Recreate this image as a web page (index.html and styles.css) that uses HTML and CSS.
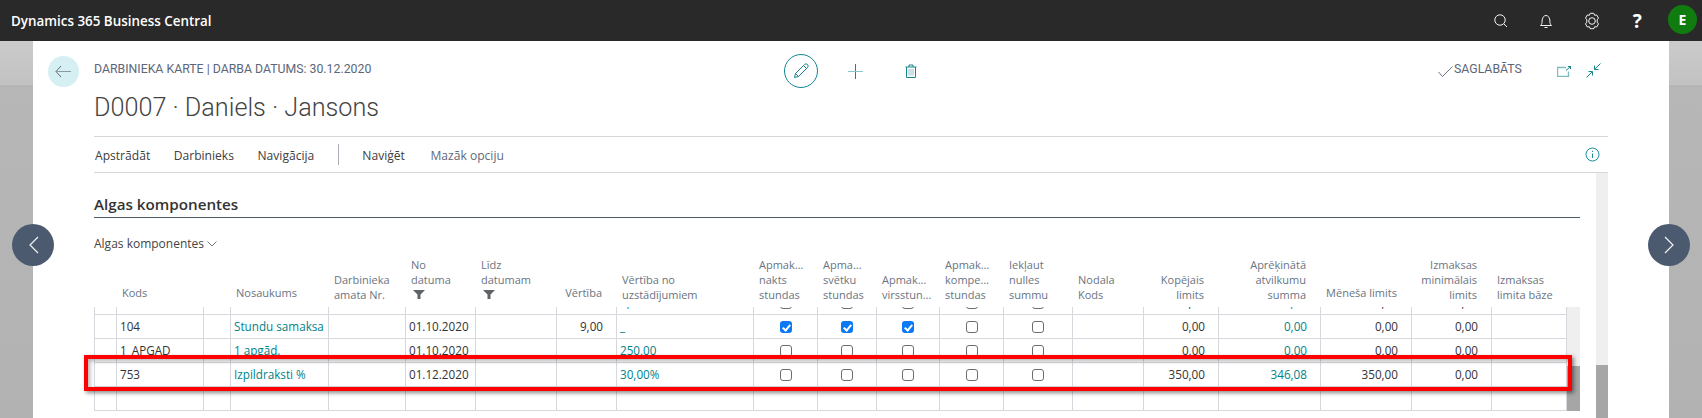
FILE: index.html
```html
<!DOCTYPE html>
<html lang="lv">
<head>
    <meta charset="UTF-8">
    <title>Darbinieka karte</title>
    <link rel="stylesheet" href="styles.css">
</head>
<body>
    <header class="topbar">
        <span class="brand">Dynamics 365 Business Central</span>
        <div class="top-icons">
            <span class="top-btn">
                <svg width="18" height="18" viewBox="0 0 18 18"><circle cx="8" cy="8" r="5.2"/><path d="M11.8 11.8 15 15"/></svg>
            </span>
            <span class="top-btn">
                <svg width="18" height="18" viewBox="0 0 18 18"><path d="M3.5 13.5c1.2-1 1.6-2 1.6-4.500 0-3 1.600-5.500 3.900-5.500s3.900 2.500 3.900 5.500c0 2.500.4 3.500 1.600 4.500z"/><path d="M7.500 15.500h3"/></svg>
            </span>
            <span class="top-btn">
                <svg width="20" height="20" viewBox="0 0 20 20"><path d="M8.200 2.300h3.600l.8 2 2.100-.3 1.800 3.100-1.300 1.700 0 2.400 1.300 1.700-1.800 3.100-2.100-.3-.8 2H8.200l-.8-2-2.100.3-1.800-3.100 1.300-1.700V8.800L3.500 7.100l1.800-3.100 2.100.3z"/><circle cx="10" cy="10" r="3.300"/></svg>
            </span>
            <span class="top-btn help">?</span>
            <span class="avatar">E</span>
        </div>
    </header>

    <div class="stage">
        <div class="gutter"></div>
        <main class="card">
            <section class="page-head">
                <div class="head-top">
                    <div class="head-left">
                        <span class="back-btn">
                            <svg width="17" height="13" viewBox="0 0 17 13"><path d="M6 1 1 6.500 6 12"/><path d="M1 6.500h15" class="soft"/></svg>
                        </span>
                        <span class="caption">DARBINIEKA KARTE | DARBA DATUMS: 30.12.2020</span>
                    </div>
                    <div class="head-actions">
                        <span class="edit-btn">
                            <svg width="16" height="16" viewBox="0 0 16 16"><path d="M1.500 14.500 2.500 10.500 11.500 1.500a1.500 1.500 0 0 1 3 3L5.500 13.500z"/><path d="M2.500 10.500 5.500 13.500M10.500 2.500l3 3"/></svg>
                        </span>
                        <svg class="plus-ico" width="15" height="15" viewBox="0 0 15 15"><path d="M7.500 0v15"/><path d="M0 7.500h15" class="soft"/></svg>
                        <svg class="trash-ico" width="12" height="14" viewBox="0 0 12 14"><path d="M.5 3h11M1.500 3v10.500h9V3M4 3V1h4v2"/><path d="M4 5v6.500M6 5v6.500M8 5v6.500" class="soft"/></svg>
                    </div>
                    <div class="head-right">
                        <svg width="15" height="11" viewBox="0 0 15 11" class="saved-ico"><path d="M.5 6 4.500 10.500 14.500.5"/></svg>
                        <span class="caption saved">SAGLABĀTS</span>
                        <svg class="open-ico" width="14" height="11" viewBox="0 0 14 11"><path d="M9 1.500H.5v9h11V5.500" class="soft"/><path d="M9 4.500 13.500.5M10.800.5h2.700v2.700"/></svg>
                        <svg class="shrink-ico" width="15" height="15" viewBox="0 0 15 15"><path d="M14.500.5 8.800 6.200M8.500 2.500v4h4"/><path d="M.5 14.500 6.200 8.800M2.500 8.500h4v4"/></svg>
                    </div>
                </div>
                <h1 class="page-title">D0007 · Daniels · Jansons</h1>
            </section>

            <nav class="action-bar">
                <a>Apstrādāt</a>
                <a>Darbinieks</a>
                <a>Navigācija</a>
                <span class="bar-sep"></span>
                <a>Naviģēt</a>
                <a class="muted">Mazāk opciju</a>
                <svg class="info-ico" width="15" height="15" viewBox="0 0 15 15"><circle cx="7.500" cy="7.500" r="6.500"/><path d="M7.500 6.500v4.500M7.500 3.800v1.200"/></svg>
            </nav>

            <div class="scroll-area">
                <div class="content">
                    <h2 class="section-title">Algas komponentes</h2>
                    <div class="part-title">Algas komponentes<svg width="10" height="6" viewBox="0 0 10 6"><path d="M.5.5 5 5 9.500.5"/></svg></div>

                    <div class="cols grid-head">
                        <div></div>
                        <div class="hd single">Kods</div>
                        <div></div>
                        <div class="hd single">Nosaukums</div>
                        <div class="hd">Darbinieka<br>amata Nr.</div>
                        <div class="hd">No<br>datuma<svg class="funnel" width="12" height="9" viewBox="0 0 12 9"><path d="M0 0h12L7.500 4.500V9h-3V4.500z"/></svg></div>
                        <div class="hd">Līdz<br>datumam<svg class="funnel" width="12" height="9" viewBox="0 0 12 9"><path d="M0 0h12L7.500 4.500V9h-3V4.500z"/></svg></div>
                        <div class="hd num single">Vērtība</div>
                        <div class="hd">Vērtība no<br>uzstādījumiem</div>
                        <div class="hd">Apmak…<br>nakts<br>stundas</div>
                        <div class="hd">Apma…<br>svētku<br>stundas</div>
                        <div class="hd">Apmak…<br>virsstun…</div>
                        <div class="hd">Apmak…<br>kompe…<br>stundas</div>
                        <div class="hd">Iekļaut<br>nulles<br>summu</div>
                        <div class="hd">Nodala<br>Kods</div>
                        <div class="hd num">Kopējais<br>limits</div>
                        <div class="hd num">Aprēķinātā<br>atvilkumu<br>summa</div>
                        <div class="hd num single">Mēneša limits</div>
                        <div class="hd num">Izmaksas<br>minimālais<br>limits</div>
                        <div class="hd">Izmaksas<br>limita bāze</div>
                    </div>

                    <div class="grid-wrap">
                        <div class="grid-body">
                            <div class="rows">
                                <div class="cols row">
                                    <div></div><div></div><div></div><div></div><div></div><div></div><div></div><div></div>
                                    <div class="link">5,00</div>
                                    <div class="chk"><i></i></div><div class="chk"><i></i></div><div class="chk"><i></i></div><div class="chk"><i></i></div><div class="chk"><i></i></div>
                                    <div></div>
                                    <div class="num">0,00</div><div class="num link">0,00</div><div class="num">0,00</div><div class="num">0,00</div><div></div>
                                </div>
                                <div class="cols row">
                                    <div></div><div>104</div><div></div><div class="link">Stundu samaksa</div><div></div><div>01.10.2020</div><div></div>
                                    <div class="num">9,00</div>
                                    <div class="link">_</div>
                                    <div class="chk"><i class="on"></i></div><div class="chk"><i class="on"></i></div><div class="chk"><i class="on"></i></div><div class="chk"><i></i></div><div class="chk"><i></i></div>
                                    <div></div>
                                    <div class="num">0,00</div><div class="num link">0,00</div><div class="num">0,00</div><div class="num">0,00</div><div></div>
                                </div>
                                <div class="cols row">
                                    <div></div><div>1_APGAD</div><div></div><div class="link">1 apgād.</div><div></div><div>01.10.2020</div><div></div><div></div>
                                    <div class="link">250,00</div>
                                    <div class="chk"><i></i></div><div class="chk"><i></i></div><div class="chk"><i></i></div><div class="chk"><i></i></div><div class="chk"><i></i></div>
                                    <div></div>
                                    <div class="num">0,00</div><div class="num link">0,00</div><div class="num">0,00</div><div class="num">0,00</div><div></div>
                                </div>
                                <div class="cols row">
                                    <div></div><div>753</div><div></div><div class="link">Izpildraksti %</div><div></div><div>01.12.2020</div><div></div><div></div>
                                    <div class="link">30,00%</div>
                                    <div class="chk"><i></i></div><div class="chk"><i></i></div><div class="chk"><i></i></div><div class="chk"><i></i></div><div class="chk"><i></i></div>
                                    <div></div>
                                    <div class="num">350,00</div><div class="num link">346,08</div><div class="num">350,00</div><div class="num">0,00</div><div></div>
                                </div>
                                <div class="cols row">
                                    <div></div><div></div><div></div><div></div><div></div><div></div><div></div><div></div><div></div><div></div>
                                    <div></div><div></div><div></div><div></div><div></div><div></div><div></div><div></div><div></div><div></div>
                                </div>
                            </div>
                        </div>
                        <div class="grid-scroll"><span class="thumb"></span></div>
                        <div class="red-box"></div>
                    </div>
                </div>
                <div class="page-scroll"><span class="thumb"></span></div>
            </div>
        </main>
        <div class="gutter"></div>

        <span class="nav-btn prev">
            <svg width="11" height="18" viewBox="0 0 11 18"><path d="M10 1 2 9l8 8"/></svg>
        </span>
        <span class="nav-btn next">
            <svg width="11" height="18" viewBox="0 0 11 18"><path d="M1 1l8 8-8 8"/></svg>
        </span>
    </div>
</body>
</html>
```

FILE: styles.css
```css
body {
    margin: 0;
    height: 100vh;
    overflow: hidden;
    display: flex;
    flex-direction: column;
    font-family: "Open Sans", "Noto Sans", sans-serif;
    font-size: 11.7px;
    color: #333;
    background: #fff;
}

svg {
    fill: none;
    stroke-width: 1;
}

/* top bar */
.topbar {
    height: 41px;
    flex: none;
    display: flex;
    align-items: center;
    justify-content: space-between;
    padding: 0 5px 0 11px;
    background: #292929;
}

.brand {
    color: #fff;
    font-size: 13.4px;
    font-weight: 600;
}

.top-icons {
    display: flex;
    align-items: center;
}

.top-btn {
    width: 45.5px;
    display: flex;
    justify-content: center;
    color: #fff;
}

.top-btn svg {
    stroke: #f4f4f4;
}

.help {
    font-size: 19px;
    font-weight: 700;
    line-height: 24px;
}

.avatar {
    width: 29px;
    height: 29px;
    margin-left: 8px;
    margin-bottom: 3px;
    border-radius: 50%;
    background: #107c10;
    color: #fff;
    font-size: 14px;
    font-weight: 700;
    line-height: 29px;
    text-align: center;
}

/* page behind the card */
.stage {
    flex: 1;
    display: flex;
    position: relative;
    min-height: 0;
}

.gutter {
    width: 33px;
    flex: none;
    background: linear-gradient(180deg, #cbcbcb 0, #c2c2c2 44px, #adadad 45px, #b7b7b7 46px, #b2b2b2 100%);
}

.nav-btn {
    position: absolute;
    top: 183px;
    width: 42px;
    height: 42px;
    border-radius: 50%;
    background: #4c5a70;
    display: flex;
    align-items: center;
    justify-content: center;
}

.nav-btn svg {
    stroke: #f2f2f2;
    stroke-width: 1.2;
}

.prev {
    left: 12px;
}

.next {
    left: 1648px;
}

.card {
    flex: 1;
    min-width: 0;
    padding: 0 61px;
    display: flex;
    flex-direction: column;
    background: #fff;
}

/* page header */
.page-head {
    height: 96px;
    flex: none;
    box-sizing: border-box;
    border-bottom: 1px solid #d5d7da;
}

.head-top {
    display: flex;
    align-items: center;
    height: 34px;
    padding-top: 13px;
}

.head-left {
    width: 690px;
    display: flex;
    align-items: center;
    margin-left: -46px;
    margin-right: 46px;
    gap: 15px;
}

.back-btn {
    width: 31px;
    height: 31px;
    border-radius: 50%;
    background: #d6eff2;
    display: flex;
    align-items: center;
    justify-content: center;
}

.back-btn svg {
    stroke: #5f6a76;
}

.back-btn .soft {
    stroke: #8a9aa0;
}

.caption {
    font-family: Roboto, "Open Sans", sans-serif;
    font-size: 12.3px;
    color: #5c6678;
    margin-bottom: 4px;
}

.head-actions {
    display: flex;
    align-items: center;
}

.edit-btn {
    width: 34px;
    height: 34px;
    box-sizing: border-box;
    border: 1px solid #13868f;
    border-radius: 50%;
    display: flex;
    align-items: center;
    justify-content: center;
}

.head-actions svg {
    stroke: #1b858d;
}

.head-actions .soft {
    stroke: #8cc5c9;
}

.plus-ico {
    margin-left: 30px;
}

.trash-ico {
    margin-left: 42px;
}

.head-right {
    margin-left: auto;
    padding-right: 7px;
    display: flex;
    align-items: center;
}

.saved-ico {
    stroke: #6a7482;
    margin-right: 1px;
}

.saved {
    width: 103px;
}

.open-ico {
    stroke: #1b858d;
}

.open-ico .soft {
    stroke: #7dbcc1;
    stroke-width: 1.4;
}

.shrink-ico {
    stroke: #1b858d;
    margin-left: 15px;
    margin-bottom: 1px;
}

.page-title {
    margin: 2px 0 0;
    font-family: Roboto, "Open Sans", sans-serif;
    font-size: 25.2px;
    font-weight: 300;
    line-height: 36px;
    color: #444;
}

/* action bar */
.action-bar {
    height: 35px;
    flex: none;
    display: flex;
    align-items: center;
    gap: 23.5px;
    padding-left: 1px;
    padding-right: 8px;
    box-sizing: border-box;
    font-size: 12.1px;
    color: #404040;
}

.action-bar a {
    margin-top: 2px;
}

.bar-sep {
    width: 1px;
    height: 21px;
    background: #a9aeb6;
}

.action-bar .muted {
    margin-left: 2px;
    color: #5f6a7a;
}

.info-ico {
    margin-left: auto;
    stroke: #1b8f99;
}

/* scrolling content */
.scroll-area {
    flex: 1;
    min-height: 0;
    display: flex;
    border-top: 1px solid #d5d7da;
}

.content {
    flex: 1;
    min-width: 0;
}

.page-scroll {
    width: 12px;
    margin-left: 16px;
    flex: none;
    display: flex;
    flex-direction: column;
    justify-content: flex-end;
    background: #efefef;
}

.page-scroll .thumb {
    height: 53px;
    background: #a6a6a6;
}

.section-title {
    margin: 0;
    height: 45px;
    box-sizing: border-box;
    padding-top: 20px;
    border-bottom: 1px solid #505a6b;
    font-size: 15.2px;
    font-weight: 600;
    line-height: 22px;
    color: #333;
}

.part-title {
    height: 20px;
    margin-top: 16px;
    font-size: 12px;
    line-height: 20px;
    color: #444;
}

.part-title svg {
    stroke: #777;
    margin-left: 3px;
    vertical-align: 1px;
}

/* grid columns are shared by head and rows */
.cols {
    display: grid;
    grid-template-columns: 22px 87px 27px 98px 77px 70px 81px 60px 137px 64px 59px 63px 64px 69px 71px 75px 102px 91px 80px 75px;
}

.grid-head {
    height: 53px;
    margin-right: 14px;
}

.hd {
    align-self: end;
    padding: 0 6px 5px;
    font-size: 11px;
    line-height: 15px;
    color: #6a7482;
    white-space: nowrap;
}

.hd.single {
    padding-bottom: 7px;
}

.hd.num {
    text-align: right;
    padding-right: 14px;
}

.funnel {
    display: block;
    fill: #5f6368;
    margin: 3px 0 3px 2px;
}

.grid-wrap {
    display: flex;
    position: relative;
}

.grid-body {
    flex: 1;
    height: 104px;
    overflow: hidden;
}

.rows {
    margin-top: -16px;
    border-left: 1px solid #d5d8dd;
    border-right: 1px solid #d5d8dd;
}

.row {
    height: 24px;
    box-sizing: border-box;
    border-bottom: 1px solid #d5d8dd;
    line-height: 23px;
    color: #333;
}

.row > div {
    border-right: 1px solid #d5d8dd;
    padding: 0 3px;
    white-space: nowrap;
}

.row > div:last-child {
    border-right: 0;
}

.row .num {
    text-align: right;
    padding-right: 13px;
}

.row .link {
    color: #00838a;
}

.chk {
    display: flex;
    align-items: center;
    justify-content: center;
}

.chk i {
    width: 12px;
    height: 12px;
    box-sizing: border-box;
    border: 1px solid #6d6d6d;
    border-radius: 3px;
    display: block;
}

.chk i.on {
    border: 0;
    background: #0b78f5;
    position: relative;
}

.chk i.on::after {
    content: "";
    position: absolute;
    left: 4px;
    top: 2px;
    width: 3px;
    height: 6px;
    border: solid #fff;
    border-width: 0 2px 2px 0;
    transform: rotate(40deg);
}

.grid-scroll {
    width: 13px;
    flex: none;
    display: flex;
    flex-direction: column;
    justify-content: flex-end;
    background: #efefef;
}

.grid-scroll .thumb {
    height: 45px;
    background: #a6a6a6;
}

.red-box {
    position: absolute;
    left: -10px;
    top: 48px;
    width: 1488px;
    height: 36px;
    box-sizing: border-box;
    border: 4px solid #f00;
    box-shadow: 2px 2px 4px rgba(0, 0, 0, 0.45), inset 2px 2px 4px rgba(0, 0, 0, 0.3);
}
```
